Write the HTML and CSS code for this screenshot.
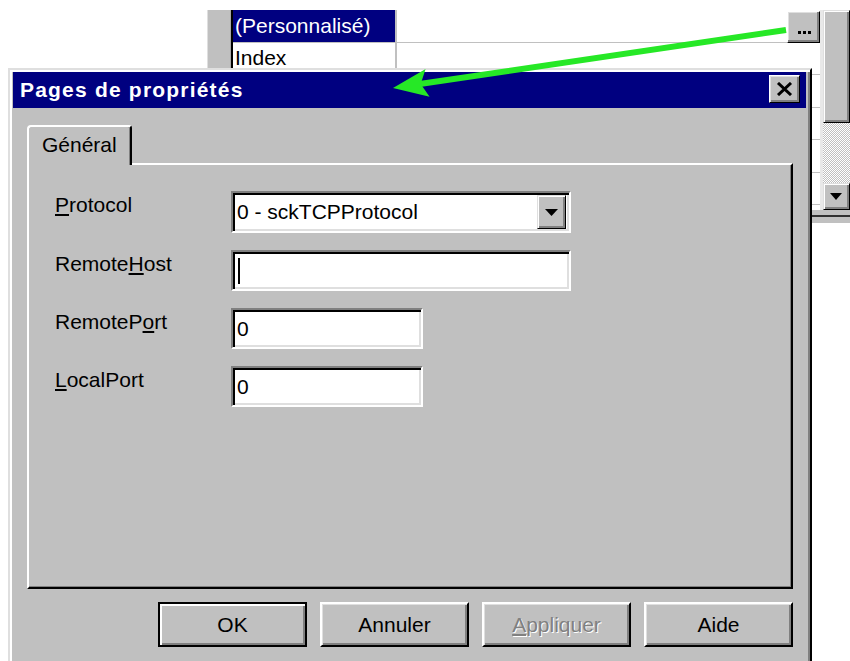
FILE: index.html
```html
<!DOCTYPE html>
<html lang="fr">
<head>
<meta charset="utf-8">
<title>Pages de propriétés</title>
<link rel="stylesheet" href="styles.css">
</head>
<body>
<div class="desktop">

  <!-- Property browser sitting behind the dialog -->
  <div class="propwin">
    <div class="propwin-main">
      <div class="propwin-side"></div>
      <div class="proplist">
        <div class="prop-row">
          <div class="prop-name selected">(Personnalisé)</div>
          <div class="prop-value">
            <span class="ellipsis-btn"><i></i><i></i><i></i></span>
          </div>
        </div>
        <div class="prop-row">
          <div class="prop-name">Index</div>
          <div class="prop-value"></div>
        </div>
        <div class="prop-row"><div class="prop-name"></div><div class="prop-value"></div></div>
        <div class="prop-row"><div class="prop-name"></div><div class="prop-value"></div></div>
        <div class="prop-row"><div class="prop-name"></div><div class="prop-value"></div></div>
        <div class="prop-row"><div class="prop-name"></div><div class="prop-value"></div></div>
      </div>
      <div class="vscroll">
        <div class="vscroll-thumb"></div>
        <div class="vscroll-track"></div>
        <div class="vscroll-btn">
          <svg width="12" height="7" viewBox="0 0 12 7"><polygon points="0,0 12,0 6,7" fill="#000"/></svg>
        </div>
      </div>
    </div>
    <div class="propwin-bottom"></div>
  </div>

  <!-- Property pages dialog -->
  <div class="dialog">
    <div class="titlebar">
      <span class="title">Pages de propriétés</span>
      <span class="close-btn">
        <svg width="17" height="14" viewBox="0 0 17 14">
          <path d="M2 1 L15 13 M15 1 L2 13" stroke="#000" stroke-width="3" fill="none"/>
        </svg>
      </span>
    </div>

    <div class="dialog-body">
      <div class="tabs">
        <div class="tab active">Général</div>
      </div>

      <div class="panel">
        <div class="form">
          <label class="label"><u>P</u>rotocol</label>
          <div class="field combo">
            <span class="field-text">0 - sckTCPProtocol</span>
            <span class="combo-btn">
              <svg width="13" height="7" viewBox="0 0 13 7"><polygon points="0,0 13,0 6.5,7" fill="#000"/></svg>
            </span>
          </div>

          <label class="label">Remote<u>H</u>ost</label>
          <div class="field wide"><span class="caret"></span></div>

          <label class="label">RemoteP<u>o</u>rt</label>
          <div class="field narrow"><span class="field-text">0</span></div>

          <label class="label"><u>L</u>ocalPort</label>
          <div class="field narrow"><span class="field-text">0</span></div>
        </div>
      </div>

      <div class="buttons">
        <span class="btn default">OK</span>
        <span class="btn">Annuler</span>
        <span class="btn disabled"><u>A</u>ppliquer</span>
        <span class="btn">Aide</span>
      </div>
    </div>
  </div>

  <!-- Callout arrow from the "..." button to the dialog title -->
  <svg class="callout" width="850" height="661" viewBox="0 0 850 661">
    <line x1="786" y1="30" x2="418" y2="84.3" stroke="#26e826" stroke-width="6"/>
    <polygon points="393,88 425.6,69.1 420.7,83.9 429.6,96.7" fill="#26e826"/>
  </svg>
</div>
</body>
</html>
```

FILE: styles.css
```css
* {
  box-sizing: border-box;
}

html,
body {
  margin: 0;
  padding: 0;
  background: #fff;
}

body {
  font-family: "Liberation Sans", Arial, sans-serif;
  font-size: 21px;
  color: #000;
}

u {
  text-decoration: underline;
  text-decoration-thickness: 2px;
  text-underline-offset: 2px;
}

.desktop {
  position: relative;
  width: 850px;
  height: 661px;
  overflow: hidden;
  background: #fff;
}

/* ---------- property browser ---------- */
.propwin {
  position: absolute;
  left: 207px;
  top: 10px;
  width: 643px;
  height: 213px;
  display: flex;
  flex-direction: column;
  background: #c0c0c0;
}

.propwin-main {
  display: flex;
  height: 200px;
}

.propwin-side {
  width: 24px;
  background: #c0c0c0;
  border-left: 1px solid #dfdfdf;
  border-right: 1px solid #a8a8a8;
}

.proplist {
  flex: 1;
  background: #fff;
  border-left: 2px solid #000;
  overflow: hidden;
}

.prop-row {
  display: flex;
  height: 32.5px;
  border-bottom: 1px solid #c0c0c0;
}

.prop-name {
  width: 164px;
  padding-left: 2px;
  border-right: 2px solid #c0c0c0;
  display: flex;
  align-items: center;
  white-space: nowrap;
  line-height: 24px;
}

.prop-name.selected {
  background: #000080;
  color: #fff;
}

.prop-value {
  flex: 1;
  display: flex;
  justify-content: flex-end;
  align-items: flex-start;
}

.ellipsis-btn {
  width: 33px;
  height: 32px;
  margin-top: 1px;
  background: #c0c0c0;
  border: 1px solid;
  border-color: #fff #000 #000 #fff;
  box-shadow: inset -2px -2px #808080, inset 1px 1px #dfdfdf;
  display: flex;
  justify-content: center;
  align-items: flex-end;
  gap: 2px;
  padding-bottom: 8px;
  padding-left: 1px;
}

.ellipsis-btn i {
  width: 3px;
  height: 3px;
  background: #000;
}

.vscroll {
  width: 30px;
  border-left: 3px solid #e8e8e8;
  display: flex;
  flex-direction: column;
}

.vscroll-thumb {
  height: 113px;
  background: #c0c0c0;
  border: 1px solid;
  border-color: #dfdfdf #000 #000 #dfdfdf;
  box-shadow: inset 1px 1px #fff, inset -2px -2px #808080;
}

.vscroll-track {
  flex: 1;
  background: repeating-conic-gradient(#c0c0c0 0 25%, #fff 0 50%) 0 0 / 2px 2px;
}

.vscroll-btn {
  height: 27px;
  background: #c0c0c0;
  border: 1px solid;
  border-color: #dfdfdf #000 #000 #dfdfdf;
  box-shadow: inset 1px 1px #fff, inset -2px -2px #808080;
  display: flex;
  align-items: center;
  justify-content: center;
  padding-right: 2px;
}

.propwin-bottom {
  flex: 1;
  background: linear-gradient(#c0c0c0 0 5px, #303030 5px 7px, #c0c0c0 7px);
}

/* ---------- dialog ---------- */
.dialog {
  position: absolute;
  left: 8px;
  top: 68px;
  width: 804px;
  height: 640px;
  background: #c0c0c0;
  border: 2px solid;
  border-color: #dfdfdf #000 #000 #dfdfdf;
  box-shadow: inset 2px 2px #fff, inset -2px -2px #808080;
  padding: 2px 4px 0 3px;
  display: flex;
  flex-direction: column;
}

.titlebar {
  height: 36px;
  background: #000080;
  display: flex;
  align-items: center;
  justify-content: space-between;
  padding: 0 6px 0 7px;
}

.title {
  color: #fff;
  font-weight: bold;
  letter-spacing: 1.2px;
  line-height: 24px;
}

.close-btn {
  width: 31px;
  height: 28px;
  margin-top: -2px;
  background: #c0c0c0;
  border: 1px solid;
  border-color: #fff #000 #000 #fff;
  box-shadow: inset 1px 1px #dfdfdf, inset -2px -2px #808080;
  display: flex;
  align-items: center;
  justify-content: center;
  padding-right: 1px;
}

.dialog-body {
  display: flex;
  flex-direction: column;
  padding: 17px 13px 0 14px;
}

.tabs {
  display: flex;
  height: 38px;
  align-items: flex-start;
}

.tab {
  position: relative;
  z-index: 1;
  width: 105px;
  height: 40px;
  background: #c0c0c0;
  border-left: 2px solid #fff;
  border-top: 2px solid #fff;
  border-right: 2px solid #000;
  border-top-left-radius: 4px;
  border-top-right-radius: 3px;
  box-shadow: inset -1px 0 #808080;
  padding-left: 13px;
  padding-top: 6px;
  line-height: 24px;
}

.panel {
  height: 426px;
  border: 2px solid;
  border-color: #fff #000 #000 #fff;
  box-shadow: inset -1px -1px #808080;
}

.form {
  display: grid;
  grid-template-columns: 176px auto;
  row-gap: 17px;
  padding: 26px 0 0 26px;
  justify-items: start;
}

.label {
  line-height: 24px;
  padding-top: 2px;
  white-space: nowrap;
}

.field {
  height: 41px;
  width: 340px;
  background: #fff;
  border: 2px solid;
  border-color: #808080 #fff #fff #808080;
  box-shadow: inset 2px 2px #000, inset -2px -2px #dfdfdf;
  display: flex;
  align-items: center;
  padding: 2px 2px 2px 4px;
}

.field.combo {
  height: 42px;
}

.field.narrow {
  width: 192px;
}

.field-text {
  flex: 1;
  line-height: 24px;
  white-space: nowrap;
}

.caret {
  width: 2px;
  height: 26px;
  background: #000;
  margin-left: 1px;
}

.combo-btn {
  width: 29px;
  height: 34px;
  background: #c0c0c0;
  border: 1px solid;
  border-color: #dfdfdf #000 #000 #dfdfdf;
  box-shadow: inset 1px 1px #fff, inset -2px -2px #808080;
  display: flex;
  align-items: center;
  justify-content: center;
  margin-right: 1px;
}

.buttons {
  display: flex;
  justify-content: flex-end;
  gap: 13px;
  margin-top: 13px;
}

.btn {
  width: 149px;
  height: 45px;
  background: #c0c0c0;
  border: 2px solid;
  border-color: #fff #000 #000 #fff;
  box-shadow: inset 1px 1px #dfdfdf, inset -2px -2px #808080;
  display: flex;
  align-items: center;
  justify-content: center;
  line-height: 24px;
  padding-top: 1px;
}

.btn.default {
  border-color: #000;
  box-shadow: inset 2px 2px #fff, inset -2px -2px #808080;
}

.btn.disabled {
  color: #808080;
  text-shadow: 1px 1px #fff;
}

/* ---------- callout arrow ---------- */
.callout {
  position: absolute;
  left: 0;
  top: 0;
  z-index: 10;
  pointer-events: none;
}
```
